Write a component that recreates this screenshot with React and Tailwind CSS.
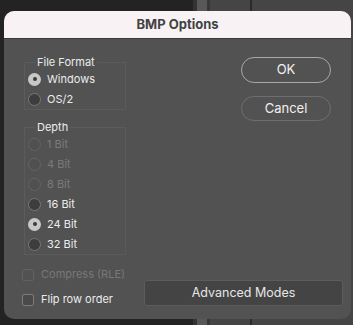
const font = { fontFamily: "Inter, 'Noto Sans', sans-serif" };

function Radio({ label, checked, disabled }) {
  return (
    <div className="flex h-[20px] items-center">
      {checked ? (
        <span className="flex h-[13px] w-[13px] items-center justify-center rounded-full bg-[#c8c8c8]">
          <span className="h-[4px] w-[4px] rounded-full bg-[#3a3a3a]" />
        </span>
      ) : disabled ? (
        <span className="h-[13px] w-[13px] rounded-full border border-[#646464] bg-[#505050]" />
      ) : (
        <span className="h-[13px] w-[13px] rounded-full border border-[#777777] bg-[#3d3d3d]" />
      )}
      <span className={`ml-[6px] text-[11px] ${disabled ? "text-[#7a7a7a]" : "text-[#ececec]"}`}>{label}</span>
    </div>
  );
}

function Group({ title, children, className }) {
  return (
    <fieldset className={`ml-[20px] w-[102px] border border-[#5b5b5b] pl-[3px] ${className}`}>
      <legend className="ml-[7px] px-[2px] text-[11px] leading-[14px] text-[#ececec]">{title}</legend>
      {children}
    </fieldset>
  );
}

function Check({ label, disabled }) {
  return (
    <div className="flex h-[25px] items-center pl-[18px]">
      <span className={`h-[12px] w-[12px] rounded-[2px] border ${disabled ? "border-[#626262]" : "border-[#7c7c7c] bg-[#4a4a4a]"}`} />
      <span className={`ml-[7px] text-[11px] ${disabled ? "text-[#787878]" : "text-[#ececec]"}`}>{label}</span>
    </div>
  );
}

export default function App() {
  return (
    <div className="relative h-[325px] w-[353px] overflow-hidden bg-[#232323]" style={font}>
      <div className="flex h-full">
        <div className="w-[193px] bg-[#232323]" />
        <div className="w-[4px] bg-[#333]" />
        <div className="w-[10px] bg-[#585858]" />
        <div className="w-[3px] bg-[#383838]" />
        <div className="w-[40px] bg-[#454545]" />
        <div className="w-[2px] bg-[#2a2a2a]" />
        <div className="flex-1 bg-[#454545]" />
      </div>

      <div className="absolute left-[4px] top-[11px] flex h-[308px] w-[347px] flex-col overflow-hidden rounded-[10px] bg-[#525252]">
        <div className="flex h-[28px] shrink-0 items-center justify-center border-b border-[#3a3a3a] bg-[#f8f2f4]">
          <span className="text-[13px] font-bold text-[#424242]">BMP Options</span>
        </div>

        <div className="flex flex-1">
          <div className="w-[140px]">
            <Group title="File Format" className="mt-[16px]">
              <Radio label="Windows" checked />
              <Radio label="OS/2" />
            </Group>
            <Group title="Depth" className="mt-[10px]">
              <Radio label="1 Bit" disabled />
              <Radio label="4 Bit" disabled />
              <Radio label="8 Bit" disabled />
              <Radio label="16 Bit" />
              <Radio label="24 Bit" checked />
              <Radio label="32 Bit" />
            </Group>
            <div className="mt-[7px]">
              <Check label="Compress (RLE)" disabled />
              <Check label="Flip row order" />
            </div>
          </div>

          <div className="flex flex-1 flex-col">
            <button className="ml-[97px] mt-[18px] h-[26px] w-[90px] rounded-full border border-[#a8a8a8] text-[13px] text-[#f2f2f2]">
              OK
            </button>
            <button className="ml-[97px] mt-[13px] h-[25px] w-[90px] rounded-full border border-[#6e6e6e] text-[13px] text-[#f0f0f0]">
              Cancel
            </button>
            <div className="flex-1" />
            <button className="mb-[13px] h-[26px] w-[199px] rounded-[3px] border border-[#5c5c5c] bg-[#444444] text-[12.5px] text-[#e6e6e6]">
              Advanced Modes
            </button>
          </div>
        </div>
      </div>
    </div>
  );
}
